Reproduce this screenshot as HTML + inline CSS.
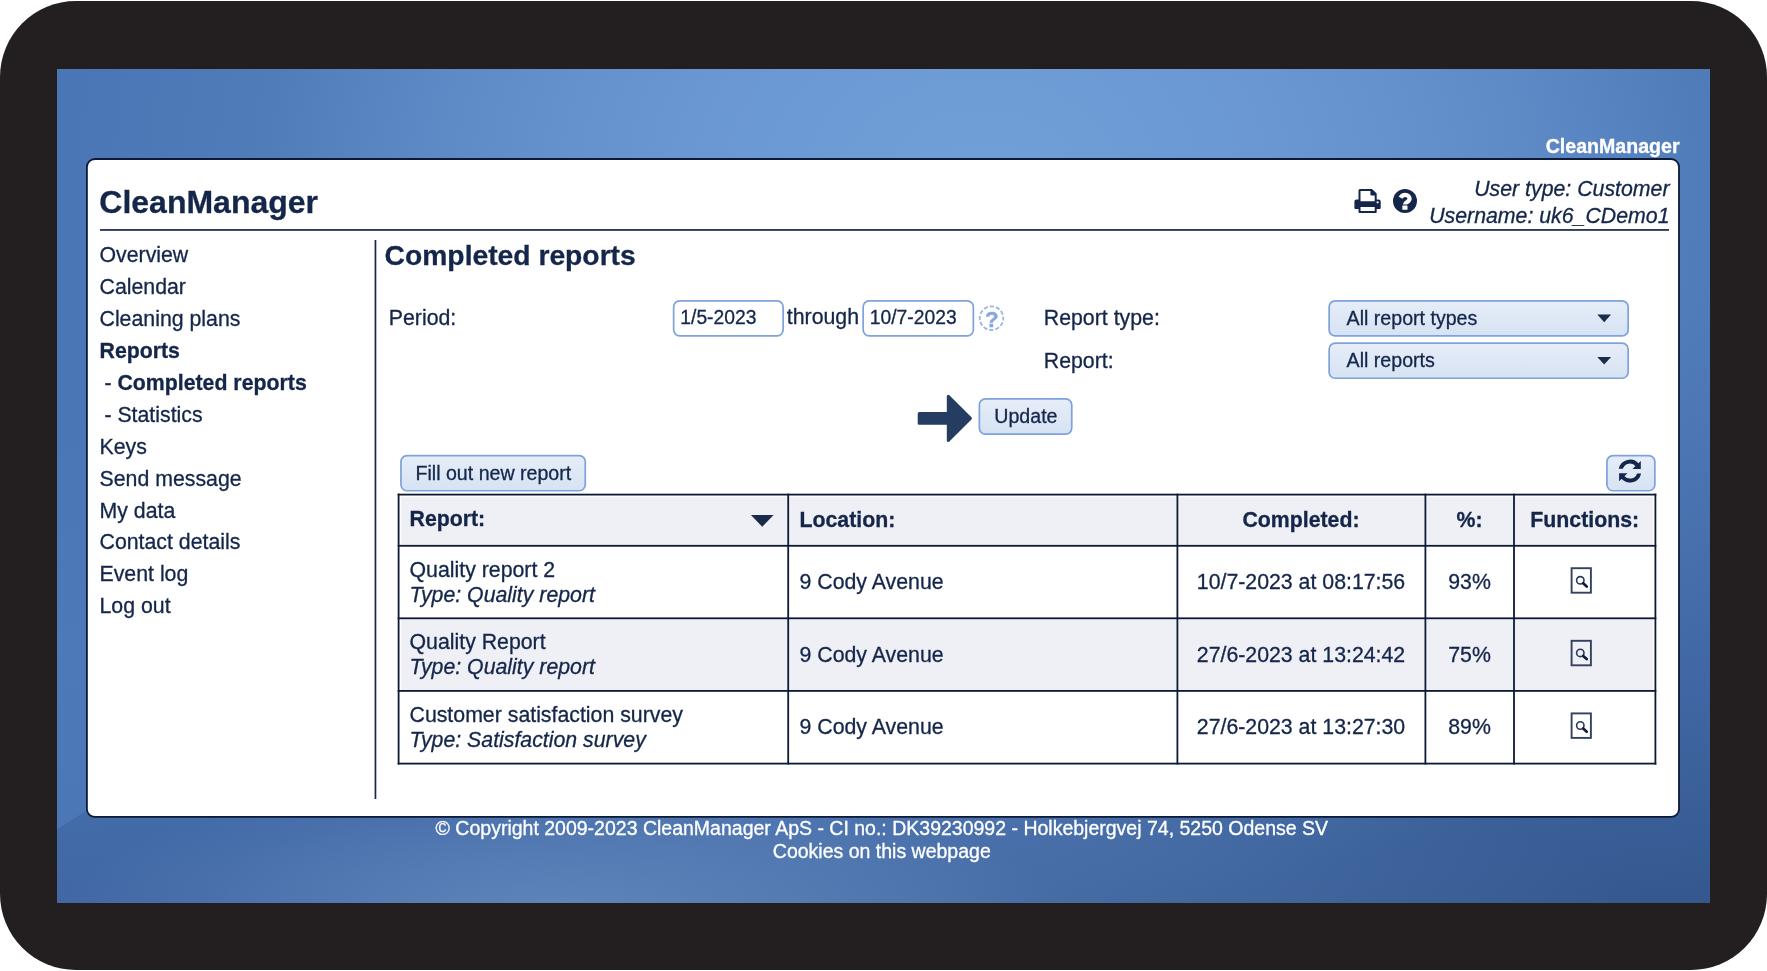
<!DOCTYPE html>
<html lang="en">
<head>
<meta charset="utf-8">
<title>CleanManager - Completed reports</title>
<style>
html,body{margin:0;padding:0;background:#fff;}
body{width:1767px;height:971px;position:relative;overflow:hidden;font-family:"Liberation Sans",Arial,Helvetica,sans-serif;color:#14264a;font-size:21.3px;-webkit-text-stroke:0.3px;}
.abs{position:absolute;}
.t{position:absolute;white-space:nowrap;line-height:1;}
.s{font-size:19.6px;}
#frame{left:0;top:1px;width:1767px;height:969px;background:#231f20;border-radius:76px;}
#screen{left:57px;top:68.5px;width:1653px;height:834px;overflow:hidden;
 background:
  radial-gradient(ellipse 500px 140px at 500px 845px, rgba(112,150,202,0.60) 0%, rgba(112,150,202,0.38) 40%, rgba(112,150,202,0) 100%),
  radial-gradient(ellipse 720px 170px at 860px 850px, rgba(100,140,195,0.32) 0%, rgba(100,140,195,0.2) 50%, rgba(100,140,195,0) 100%),
  radial-gradient(ellipse 950px 760px at 925px 120px, rgba(113,159,216,1) 0%, rgba(113,159,216,0.83) 29%, rgba(113,159,216,0.68) 44%, rgba(113,159,216,0.48) 58%, rgba(113,159,216,0.14) 76%, rgba(113,159,216,0) 97%),
  linear-gradient(172deg,#4b76b5 0%, #4b76b5 45%, #4067a3 80%, #34578e 100%);}
#lstrip{left:57px;top:68.5px;width:31px;height:762px;clip-path:polygon(0 0,100% 0,100% 741px,0 761px);
 background:linear-gradient(180deg,rgba(77,121,184,0) 0%,rgba(77,121,184,0) 45%,rgba(77,121,184,1) 75%,#4c77b6 100%);}
.b{font-weight:bold;}
.i{font-style:italic;}
.w{color:#fff;}
svg{position:absolute;left:0;top:0;}
</style>
</head>
<body>
<div id="frame" class="abs"></div>
<div id="screen" class="abs"></div>
<div id="lstrip" class="abs"></div>
<svg width="1767" height="971" viewBox="0 0 1767 971">
<defs><linearGradient id="bg" x1="0" y1="0" x2="0" y2="1"><stop offset="0" stop-color="#e6edf8"/><stop offset="1" stop-color="#d6e3f3"/></linearGradient></defs>
<rect x="86.9" y="159" width="1592.1" height="657.9" rx="8" fill="#fff" stroke="#0c1a38" stroke-width="1.8"/>
<rect x="100" y="229.1" width="1569" height="1.7" fill="#14264a"/>
<rect x="374.6" y="240" width="1.7" height="559" fill="#14264a"/>
<rect x="673.65" y="300.95" width="109.50" height="34.90" rx="6" fill="#fff" stroke="#7ea2db" stroke-width="1.7"/>
<rect x="863.15" y="300.95" width="110.20" height="34.90" rx="6" fill="#fff" stroke="#7ea2db" stroke-width="1.7"/>
<rect x="1329.15" y="300.85" width="299.00" height="35.10" rx="6" fill="url(#bg)" stroke="#7ea2db" stroke-width="1.7"/>
<rect x="1329.15" y="343.15" width="299.00" height="35.10" rx="6" fill="url(#bg)" stroke="#7ea2db" stroke-width="1.7"/>
<rect x="979.35" y="398.85" width="92.40" height="35.20" rx="6" fill="url(#bg)" stroke="#7ea2db" stroke-width="1.7"/>
<rect x="400.95" y="455.55" width="184.30" height="35.20" rx="6" fill="url(#bg)" stroke="#7ea2db" stroke-width="1.7"/>
<rect x="1606.95" y="455.55" width="47.90" height="35.20" rx="6" fill="url(#bg)" stroke="#7ea2db" stroke-width="1.7"/>
<rect x="401.15" y="497.15" width="386.20" height="47.80" fill="#efeff6"/>
<rect x="789.05" y="497.15" width="387.50" height="47.80" fill="#efeff6"/>
<rect x="1178.25" y="497.15" width="246.30" height="47.80" fill="#efeff6"/>
<rect x="1426.25" y="497.15" width="86.90" height="47.80" fill="#efeff6"/>
<rect x="1514.85" y="497.15" width="138.00" height="47.80" fill="#efeff6"/>
<rect x="401.15" y="619.15" width="386.20" height="70.90" fill="#efeff6"/>
<rect x="789.05" y="619.15" width="387.50" height="70.90" fill="#efeff6"/>
<rect x="1178.25" y="619.15" width="246.30" height="70.90" fill="#efeff6"/>
<rect x="1426.25" y="619.15" width="86.90" height="70.90" fill="#efeff6"/>
<rect x="1514.85" y="619.15" width="138.00" height="70.90" fill="#efeff6"/>
<rect x="397.70" y="493.70" width="1258.60" height="1.8" fill="#0d1a36"/>
<rect x="397.70" y="544.90" width="1258.60" height="1.8" fill="#0d1a36"/>
<rect x="397.70" y="617.40" width="1258.60" height="1.8" fill="#0d1a36"/>
<rect x="397.70" y="690.00" width="1258.60" height="1.8" fill="#0d1a36"/>
<rect x="397.70" y="762.70" width="1258.60" height="1.8" fill="#0d1a36"/>
<rect x="397.70" y="493.70" width="1.8" height="270.80" fill="#0d1a36"/>
<rect x="787.30" y="493.70" width="1.8" height="270.80" fill="#0d1a36"/>
<rect x="1176.50" y="493.70" width="1.8" height="270.80" fill="#0d1a36"/>
<rect x="1424.50" y="493.70" width="1.8" height="270.80" fill="#0d1a36"/>
<rect x="1513.10" y="493.70" width="1.8" height="270.80" fill="#0d1a36"/>
<rect x="1654.50" y="493.70" width="1.8" height="270.80" fill="#0d1a36"/>
<path d="M750.9 514.9 L773.6 514.9 L762.25 526.8 Z" fill="#1a2b4b"/>
<path d="M1597.3 314.6 L1611.1 314.6 L1604.2 322.3 Z" fill="#1a2b4b"/>
<path d="M1597.3 356.9 L1611.1 356.9 L1604.2 364.6 Z" fill="#1a2b4b"/>
<path d="M919.2 413.5 H948.3 V396.3 L970.4 418.35 L948.3 440.4 V423.2 H919.2 Z" fill="#253d60" stroke="#253d60" stroke-width="3" stroke-linejoin="round"/>
<path fill="#14264a" fill-rule="evenodd" d="M1360 188.9 H1372 L1376.7 193.6 V199.4 H1378.6 Q1380.7 199.4 1380.7 201.5 V208 Q1380.7 209 1379.7 209 H1376.7 V212 Q1376.7 213.1 1375.6 213.1 H1359.6 Q1358.5 213.1 1358.5 212 V209 H1355.4 Q1354.4 209 1354.4 208 V201.5 Q1354.4 199.4 1356.5 199.4 H1358.5 V190.4 Q1358.5 188.9 1360 188.9 Z M1360.5 190.9 V201.3 H1374.7 V195.6 H1371.4 Q1370.4 195.6 1370.4 194.6 V190.9 Z M1360.5 206.9 V211.1 H1374.7 V206.9 Z M1377.6 201.2 A1.1 1.1 0 1 0 1377.6 203.4 A1.1 1.1 0 1 0 1377.6 201.2 Z"/>
<circle cx="1405" cy="201.1" r="12" fill="#14264a"/>
<path d="M1400.6 197.8 C1401.6 195.8 1403 194.9 1405.2 194.9 C1407.9 194.9 1409.6 196.5 1409.6 198.6 C1409.6 200.4 1408.6 201.2 1407.2 202.1 C1405.6 203.1 1404.9 203.7 1404.9 204.4" fill="none" stroke="#fff" stroke-width="4.2"/>
<rect x="1402.3" y="205.6" width="5.2" height="4.1" rx="0.5" fill="#fff"/>
<circle cx="991.5" cy="318.2" r="11.8" fill="none" stroke="#9fb9e4" stroke-width="1.9" stroke-dasharray="4.3 1.88" stroke-dashoffset="2.1"/>
<path d="M1618.78 468.80 A11.4 11.4 0 0 1 1638.93 464.08 L1635.82 466.51 A7.45 7.45 0 0 0 1622.86 468.80 Z M1640.8 460.9 V468.9 H1632.4 Z" fill="#14264a"/>
<g transform="rotate(180 1629.95 471.1)"><path d="M1618.78 468.80 A11.4 11.4 0 0 1 1638.93 464.08 L1635.82 466.51 A7.45 7.45 0 0 0 1622.86 468.80 Z M1640.8 460.9 V468.9 H1632.4 Z" fill="#14264a"/></g>
<g transform="translate(0 0.0)"><rect x="1571.6" y="568.2" width="19.3" height="24.5" fill="none" stroke="#33425f" stroke-width="1.9"/><circle cx="1580.3" cy="580.3" r="3.7" fill="none" stroke="#2b3a59" stroke-width="1.6"/><path d="M1583.2 583.3 L1586.7 586.5" stroke="#0d1c3c" stroke-width="2.7" stroke-linecap="round"/></g>
<g transform="translate(0 72.6)"><rect x="1571.6" y="568.2" width="19.3" height="24.5" fill="none" stroke="#33425f" stroke-width="1.9"/><circle cx="1580.3" cy="580.3" r="3.7" fill="none" stroke="#2b3a59" stroke-width="1.6"/><path d="M1583.2 583.3 L1586.7 586.5" stroke="#0d1c3c" stroke-width="2.7" stroke-linecap="round"/></g>
<g transform="translate(0 145.2)"><rect x="1571.6" y="568.2" width="19.3" height="24.5" fill="none" stroke="#33425f" stroke-width="1.9"/><circle cx="1580.3" cy="580.3" r="3.7" fill="none" stroke="#2b3a59" stroke-width="1.6"/><path d="M1583.2 583.3 L1586.7 586.5" stroke="#0d1c3c" stroke-width="2.7" stroke-linecap="round"/></g>
</svg>
<div id="txt" style="position:absolute;left:0;top:0;width:1767px;height:971px;will-change:transform;">
<div class="t b w" style="right:87.4px;top:137.0px;font-size:19.6px;">CleanManager</div>
<div class="t b" style="left:99.3px;top:186.0px;font-size:32px;">CleanManager</div>
<div class="t i" style="right:97.5px;top:179.0px;">User type: Customer</div>
<div class="t i" style="right:97.5px;top:206.0px;">Username: uk6_CDemo1</div>
<div class="t " style="left:99.5px;top:245.0px;">Overview</div>
<div class="t " style="left:99.5px;top:277.0px;">Calendar</div>
<div class="t " style="left:99.5px;top:309.0px;">Cleaning plans</div>
<div class="t b" style="left:99.5px;top:341.0px;">Reports</div>
<div class="t " style="left:104.4px;top:373.0px;">- <b>Completed reports</b></div>
<div class="t " style="left:104.4px;top:405.0px;">- Statistics</div>
<div class="t " style="left:99.5px;top:437.0px;">Keys</div>
<div class="t " style="left:99.5px;top:469.0px;">Send message</div>
<div class="t " style="left:99.5px;top:501.0px;">My data</div>
<div class="t " style="left:99.5px;top:532.0px;">Contact details</div>
<div class="t " style="left:99.5px;top:564.0px;">Event log</div>
<div class="t " style="left:99.5px;top:596.0px;">Log out</div>
<div class="t b" style="left:384.6px;top:241.0px;font-size:28.25px;">Completed reports</div>
<div class="t " style="left:388.8px;top:308.0px;">Period:</div>
<div class="t " style="left:680.3px;top:308.0px;font-size:19.3px;">1/5-2023</div>
<div class="t " style="left:786.8px;top:307.0px;">through</div>
<div class="t " style="left:869.8px;top:308.0px;font-size:19.3px;">10/7-2023</div>
<div class="t b" style="left:985.0px;top:309.0px;font-size:22.4px;color:#86a6dc;-webkit-text-stroke:0.4px;">?</div>
<div class="t " style="left:1043.8px;top:308.0px;">Report type:</div>
<div class="t " style="left:1043.8px;top:351.0px;">Report:</div>
<div class="t " style="left:1346.6px;top:309.0px;font-size:19.6px;">All report types</div>
<div class="t " style="left:1346.6px;top:351.0px;font-size:19.6px;">All reports</div>
<div class="t " style="left:994.3px;top:407.0px;font-size:19.6px;">Update</div>
<div class="t " style="left:415.5px;top:464.0px;font-size:19.6px;">Fill out new report</div>
<div class="t b" style="left:409.5px;top:509.0px;">Report:</div>
<div class="t b" style="left:799.5px;top:510.0px;">Location:</div>
<div class="t b" style="left:1151.0px;width:300px;text-align:center;top:510.0px;">Completed:</div>
<div class="t b" style="left:1319.5px;width:300px;text-align:center;top:510.0px;">%:</div>
<div class="t b" style="left:1434.7px;width:300px;text-align:center;top:510.0px;">Functions:</div>
<div class="t " style="left:409.5px;top:560.0px;">Quality report 2</div>
<div class="t i" style="left:409.5px;top:585.0px;">Type: Quality report</div>
<div class="t " style="left:799.5px;top:572.0px;">9 Cody Avenue</div>
<div class="t " style="left:1151.0px;width:300px;text-align:center;top:572.0px;">10/7-2023 at 08:17:56</div>
<div class="t " style="left:1319.5px;width:300px;text-align:center;top:572.0px;">93%</div>
<div class="t " style="left:409.5px;top:632.0px;">Quality Report</div>
<div class="t i" style="left:409.5px;top:657.0px;">Type: Quality report</div>
<div class="t " style="left:799.5px;top:645.0px;">9 Cody Avenue</div>
<div class="t " style="left:1151.0px;width:300px;text-align:center;top:645.0px;">27/6-2023 at 13:24:42</div>
<div class="t " style="left:1319.5px;width:300px;text-align:center;top:645.0px;">75%</div>
<div class="t " style="left:409.5px;top:705.0px;">Customer satisfaction survey</div>
<div class="t i" style="left:409.5px;top:730.0px;">Type: Satisfaction survey</div>
<div class="t " style="left:799.5px;top:717.0px;">9 Cody Avenue</div>
<div class="t " style="left:1151.0px;width:300px;text-align:center;top:717.0px;">27/6-2023 at 13:27:30</div>
<div class="t " style="left:1319.5px;width:300px;text-align:center;top:717.0px;">89%</div>
<div class="t w" style="left:281.8px;width:1200px;text-align:center;top:819.0px;font-size:19.5px;">© Copyright 2009-2023 CleanManager ApS - CI no.: DK39230992 - Holkebjergvej 74, 5250 Odense SV</div>
<div class="t w" style="left:731.8px;width:300px;text-align:center;top:842.0px;font-size:19.5px;">Cookies on this webpage</div>
</div>
</body>
</html>
